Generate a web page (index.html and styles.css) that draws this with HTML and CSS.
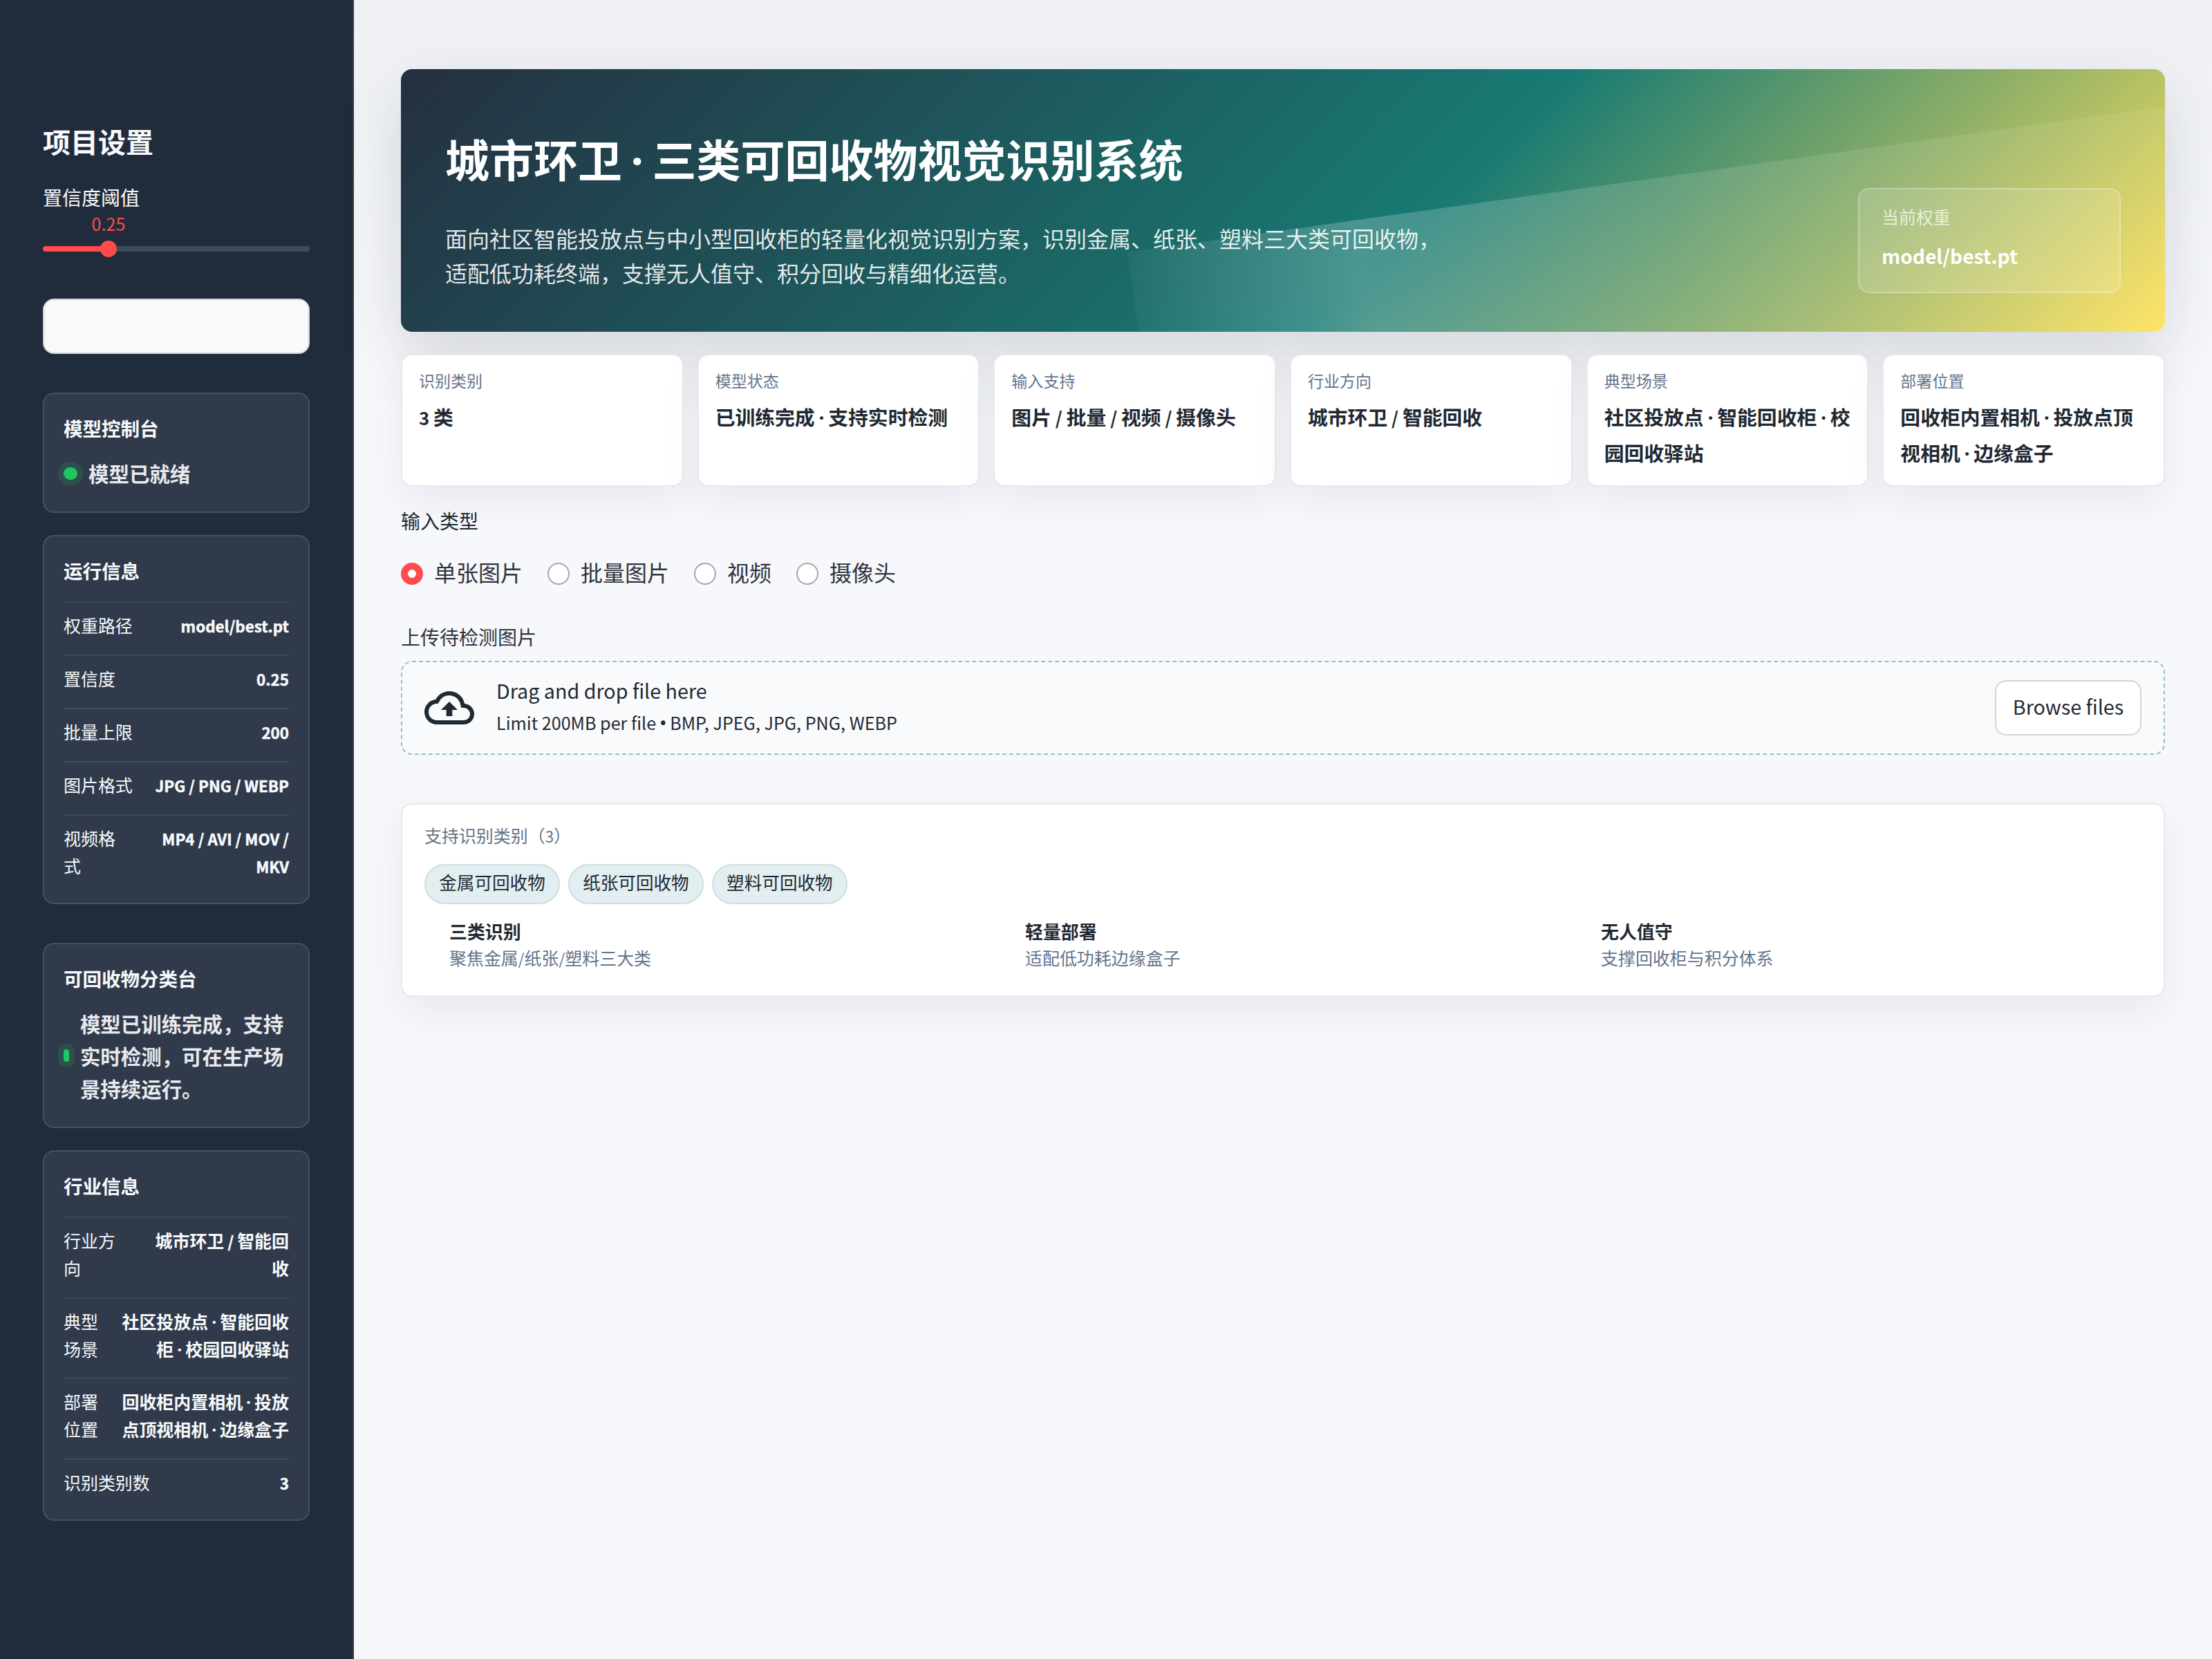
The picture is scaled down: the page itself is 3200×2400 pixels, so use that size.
FILE: index.html
```html
<!DOCTYPE html>
<html lang="zh-CN">
<head>
<meta charset="utf-8">
<title>城市环卫 · 三类可回收物视觉识别系统</title>
<link rel="stylesheet" href="styles.css">
</head>
<body>
<div class="app">
  <aside class="sidebar">
    <h2 class="side-title">项目设置</h2>
    <div class="slider">
      <div class="field-label">置信度阈值</div>
      <div class="slider-value"><span class="lat">0.25</span></div>
      <div class="slider-track"><span class="slider-thumb"></span></div>
    </div>
    <button class="cache-btn">清空模型缓存</button>
    <section class="panel">
      <h3 class="panel-title">模型控制台</h3>
      <div class="status"><span class="dot"></span><span>模型已就绪</span></div>
    </section>
    <section class="panel">
      <h3 class="panel-title">运行信息</h3>
      <div class="row"><span>权重路径</span><b><span class="lat">model/best.pt</span></b></div>
      <div class="row"><span>置信度</span><b><span class="lat">0.25</span></b></div>
      <div class="row"><span>批量上限</span><b><span class="lat">200</span></b></div>
      <div class="row"><span>图片格式</span><b><span class="lat">JPG / PNG / WEBP</span></b></div>
      <div class="row"><span>视频格<br>式</span><b><span class="lat">MP4 / AVI / MOV /</span><br><span class="lat">MKV</span></b></div>
    </section>
    <section class="panel panel-spaced">
      <h3 class="panel-title">可回收物分类台</h3>
      <div class="status"><span class="dot"></span><span>模型已训练完成，支持实时检测，可在生产场景持续运行。</span></div>
    </section>
    <section class="panel">
      <h3 class="panel-title">行业信息</h3>
      <div class="row"><span>行业方<br>向</span><b>城市环卫<span class="lat"> / </span>智能回<br>收</b></div>
      <div class="row"><span>典型<br>场景</span><b>社区投放点<span class="mid">·</span>智能回收<br>柜<span class="mid">·</span>校园回收驿站</b></div>
      <div class="row"><span>部署<br>位置</span><b>回收柜内置相机<span class="mid">·</span>投放<br>点顶视相机<span class="mid">·</span>边缘盒子</b></div>
      <div class="row"><span>识别类别数</span><b><span class="lat">3</span></b></div>
    </section>
  </aside>
  <main class="main">
    <header class="hero">
      <div class="hero-text">
        <h1>城市环卫<span class="mid">·</span>三类可回收物视觉识别系统</h1>
        <p>面向社区智能投放点与中小型回收柜的轻量化视觉识别方案，识别金属、纸张、塑料三大类可回收物，<br>适配低功耗终端，支撑无人值守、积分回收与精细化运营。</p>
      </div>
      <div class="weight">
        <span class="weight-label">当前权重</span>
        <span class="weight-value"><span class="lat">model/best.pt</span></span>
      </div>
    </header>
    <section class="metrics">
      <div class="metric"><span>识别类别</span><b><span class="lat">3 </span>类</b></div>
      <div class="metric"><span>模型状态</span><b>已训练完成<span class="mid">·</span>支持实时检测</b></div>
      <div class="metric"><span>输入支持</span><b>图片<span class="lat"> / </span>批量<span class="lat"> / </span>视频<span class="lat"> / </span>摄像头</b></div>
      <div class="metric"><span>行业方向</span><b>城市环卫<span class="lat"> / </span>智能回收</b></div>
      <div class="metric"><span>典型场景</span><b>社区投放点<span class="mid">·</span>智能回收柜<span class="mid">·</span>校<br>园回收驿站</b></div>
      <div class="metric"><span>部署位置</span><b>回收柜内置相机<span class="mid">·</span>投放点顶<br>视相机<span class="mid">·</span>边缘盒子</b></div>
    </section>
    <div class="field-label input-label">输入类型</div>
    <div class="radios">
      <label class="radio"><i class="on"></i><span>单张图片</span></label>
      <label class="radio"><i></i><span>批量图片</span></label>
      <label class="radio"><i></i><span>视频</span></label>
      <label class="radio"><i></i><span>摄像头</span></label>
    </div>
    <div class="field-label upload-label">上传待检测图片</div>
    <section class="dropzone">
      <svg class="cloud" viewBox="0 0 24 24"><path fill="currentColor" d="M19.35 10.04A7.49 7.49 0 0 0 12 4C9.11 4 6.6 5.64 5.35 8.04A5.994 5.994 0 0 0 0 14c0 3.31 2.69 6 6 6h13c2.76 0 5-2.24 5-5 0-2.64-2.05-4.78-4.65-4.96zM19 18H6c-2.21 0-4-1.79-4-4 0-2.05 1.53-3.76 3.56-3.97l1.07-.11.5-.95A5.469 5.469 0 0 1 12 6c2.62 0 4.88 1.86 5.39 4.43l.3 1.5 1.53.11A2.98 2.98 0 0 1 22 15c0 1.65-1.35 3-3 3zM8 13h2.55v3h2.9v-3H16l-4-4z"/></svg>
      <div class="drop-text">
        <span class="drop-main"><span class="lat">Drag and drop file here</span></span>
        <span class="drop-sub"><span class="lat">Limit 200MB per file</span><span class="bullet">•</span><span class="lat">BMP, JPEG, JPG, PNG, WEBP</span></span>
      </div>
      <button class="browse"><span class="lat">Browse files</span></button>
    </section>
    <section class="classes">
      <div class="classes-title">支持识别类别（<span class="lat">3</span>）</div>
      <div class="pills"><span>金属可回收物</span><span>纸张可回收物</span><span>塑料可回收物</span></div>
      <div class="features">
        <div><b>三类识别</b><span>聚焦金属<span class="lat">/</span>纸张<span class="lat">/</span>塑料三大类</span></div>
        <div><b>轻量部署</b><span>适配低功耗边缘盒子</span></div>
        <div><b>无人值守</b><span>支撑回收柜与积分体系</span></div>
      </div>
    </section>
  </main>
</div>
</body>
</html>
```
FILE: styles.css
```css
* { box-sizing: border-box; }
body {
  margin: 0;
  font-family: "Noto Sans CJK SC", sans-serif;
  color: #1f2933;
}
h1, h2, h3, p { margin: 0; }
button { font-family: inherit; margin: 0; }
.lat { font-size: 0.897em; line-height: 0; white-space: pre; }
.mid, .bullet {
  display: inline-block;
  font-family: "Noto Sans", sans-serif;
  line-height: 0;
  text-align: center;
}
.mid { width: 0.68em; }
.bullet { width: 0.72em; }
.app { display: flex; width: 3200px; height: 2400px; overflow: hidden; }

.sidebar {
  width: 512px;
  flex: none;
  padding: 174px 62px 0;
  background: #202b3b;
  border-right: 2px solid #323d4d;
  color: #f8fafc;
}
.side-title { font-size: 40px; line-height: 60px; font-weight: 700; }
.field-label { font-size: 28px; line-height: 42px; white-space: nowrap; }
.slider { margin-top: 30px; }
.slider-value { width: 190px; height: 40px; line-height: 33px; font-size: 28px; text-align: center; color: #ff4b4b; }
.slider-track {
  display: flex;
  align-items: center;
  height: 8px;
  width: 386px;
  margin-top: 10px;
  border-radius: 4px;
  background: linear-gradient(90deg, #ff4b4b 25%, #3f4a5c 25%);
}
.slider-thumb { width: 24px; height: 24px; margin-left: 83px; border-radius: 50%; background: #ff4b4b; }
.cache-btn {
  display: block;
  width: 386px;
  height: 80px;
  margin: 68px 0 56px;
  padding: 0 0 4px;
  border: 2px solid #d4d4d8;
  border-radius: 16px;
  background: #f9f9fb;
  color: #f8fafc;
  font-size: 32px;
}
.panel {
  width: 386px;
  margin-bottom: 32px;
  padding: 27px 28px 28px;
  border: 2px solid #465062;
  border-radius: 16px;
  background: #303a4b;
}
.panel-spaced { margin-top: 56px; }
.panel-title { font-size: 27.52px; line-height: 44px; }
.status {
  display: flex;
  align-items: center;
  gap: 16px;
  margin: 20px 0 4px;
  font-size: 29.44px;
  line-height: 47.1px;
  font-weight: 700;
  color: #e8e9ee;
}
.dot { width: 20px; height: 18px; border-radius: 10px; background: #22c55e; box-shadow: 0 0 0 8px rgba(34, 197, 94, 0.16); }
.row {
  display: flex;
  justify-content: space-between;
  padding: 13px 0 22px;
  border-top: 2px solid #3f495a;
  font-size: 24.96px;
  line-height: 39.9px;
}
.panel-title + .row { margin-top: 23px; }
.row:last-child { padding-bottom: 5px; }
.row > * { white-space: nowrap; }
.row b { text-align: right; }
.row .lat { -webkit-text-stroke: 0.5px currentColor; }

.main {
  flex: 1;
  min-width: 0;
  padding: 100px 68px 0;
  background: linear-gradient(180deg, #eef0f4 0, #f7f8fc 520px);
}
.hero {
  position: relative;
  display: flex;
  justify-content: space-between;
  align-items: flex-end;
  height: 380px;
  padding: 56px 64px;
  overflow: hidden;
  border-radius: 16px;
  color: #fff;
  background: linear-gradient(135deg, #252f40 0%, #187a73 58%, #ffe25c 100%);
  box-shadow: 0 36px 90px rgba(31, 41, 55, 0.16);
}
.hero::after {
  content: "";
  position: absolute;
  left: 1051px;
  top: 265px;
  width: 1720px;
  height: 520px;
  transform-origin: 0 0;
  transform: rotate(-8deg);
  background: linear-gradient(90deg, rgba(255, 255, 255, 0.04), rgba(255, 255, 255, 0.22) 19%, rgba(255, 255, 255, 0.12) 46%, rgba(255, 255, 255, 0.06));
}
.hero-text, .weight { position: relative; z-index: 1; }
.hero h1 { font-size: 64px; line-height: 76px; white-space: nowrap; }
.hero p { margin: 53px 0 5px; font-size: 32px; line-height: 50px; color: rgba(255, 255, 255, 0.88); white-space: nowrap; }
.weight {
  display: flex;
  flex-direction: column;
  width: 380px;
  height: 152px;
  padding: 19px 32px;
  border: 2px solid rgba(255, 255, 255, 0.26);
  border-radius: 16px;
  background: rgba(255, 255, 255, 0.14);
}
.weight-label { font-size: 24.96px; line-height: 40px; color: rgba(255, 255, 255, 0.72); }
.weight-value { margin-top: 12px; font-size: 31.4px; line-height: 48px; font-weight: 700; }

.metrics {
  position: relative;
  display: grid;
  grid-template-columns: repeat(6, minmax(0, 1fr));
  gap: 20px;
  margin-top: 32px;
}
.metric {
  height: 192px;
  padding: 18px 24px;
  border: 2px solid #e6e9ec;
  border-radius: 16px;
  background: #fff;
  box-shadow: 0 20px 56px rgba(31, 41, 55, 0.07);
  white-space: nowrap;
}
.metric > span { display: block; font-size: 23.04px; line-height: 36px; color: #64748b; }
.metric > b { display: block; margin-top: 9px; font-size: 28.8px; line-height: 52px; }

.input-label { margin-top: 28px; }
.radios { display: flex; gap: 36px; margin-top: 32px; }
.radio { display: flex; align-items: center; gap: 16px; height: 48px; font-size: 32px; line-height: 48px; color: #31333f; }
.radio span { margin-bottom: 7px; }
.radio i { width: 32px; height: 32px; border: 2px solid #a5a6ad; border-radius: 50%; background: #fff; }
.radio .on { border: 10px solid #ff4b4b; }
.upload-label { margin-top: 46px; color: #31333f; }

.dropzone {
  display: flex;
  align-items: center;
  height: 136px;
  margin-top: 14px;
  padding: 0 32px;
  border: 2px dashed #93c3be;
  border-radius: 16px;
  background: #f9fafc;
}
.cloud { width: 72px; height: 72px; }
.drop-text { display: flex; flex-direction: column; margin: 0 0 7px 32px; }
.drop-main { font-size: 32px; line-height: 48px; }
.drop-sub { font-size: 28px; line-height: 47px; }
.browse {
  width: 212px;
  height: 80px;
  margin-left: auto;
  padding: 0 0 8px;
  border: 2px solid #d4d5d9;
  border-radius: 16px;
  background: #fff;
  color: #1f2933;
  font-size: 32px;
}
.classes {
  height: 280px;
  margin-top: 70px;
  padding: 24px 32px;
  border: 2px solid #e6e9ec;
  border-radius: 16px;
  background: #fff;
  box-shadow: 0 20px 56px rgba(31, 41, 55, 0.07);
}
.classes-title { font-size: 24.96px; line-height: 40px; color: #64748b; }
.pills { display: flex; gap: 12px; margin-top: 22px; }
.pills span {
  height: 58px;
  padding: 0 19.2px;
  border: 2px solid #cfdee0;
  border-radius: 29px;
  background: #e3eef0;
  font-size: 25.6px;
  line-height: 48px;
}
.features { display: grid; grid-template-columns: repeat(3, 833px); margin: 19px 0 0 36px; }
.features div { display: flex; flex-direction: column; }
.features b { font-size: 25.92px; line-height: 40px; }
.features div > span { font-size: 24.96px; line-height: 37px; color: #64748b; }
```
